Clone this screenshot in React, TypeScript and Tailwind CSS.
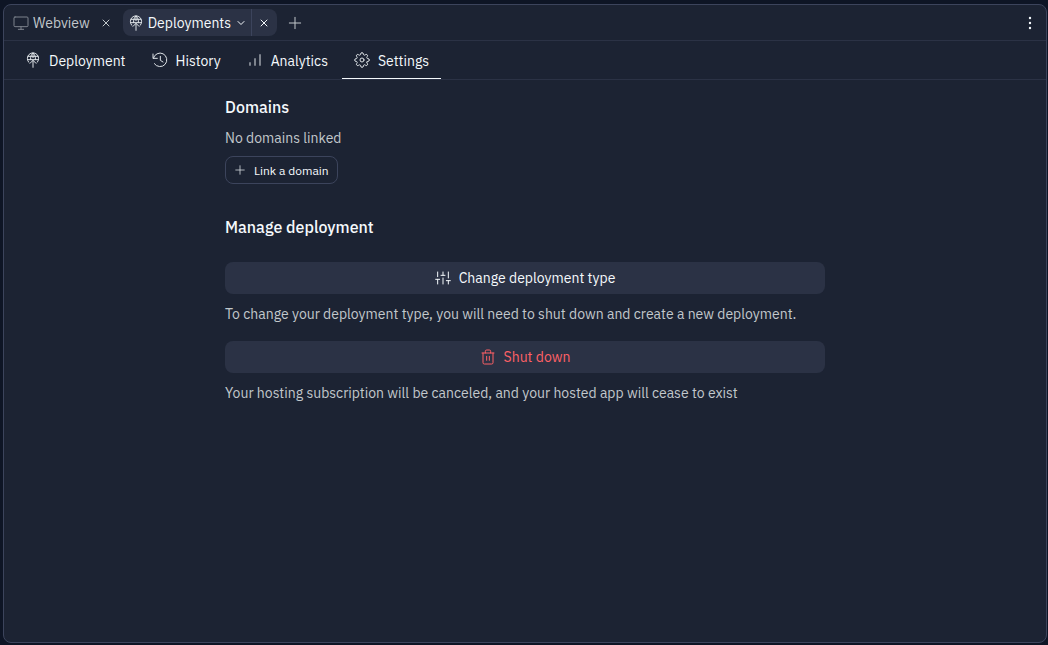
import type { ReactNode } from 'react';

type IconProps = { className?: string };

function Icon({ className = 'size-4', children }: IconProps & { children: ReactNode }) {
  return (
    <svg
      viewBox="0 0 24 24"
      className={`shrink-0 ${className}`}
      fill="none"
      stroke="currentColor"
      strokeWidth="1.5"
      strokeLinecap="round"
      strokeLinejoin="round"
      aria-hidden="true"
    >
      {children}
    </svg>
  );
}

const MonitorIcon = ({ className }: IconProps) => (
  <Icon className={className}>
    <rect x="1.5" y="3" width="21" height="14.5" rx="1.5" />
    <path d="M12 17.5V21.5M8 21.5h8" />
  </Icon>
);

const DeployIcon = ({ className }: IconProps) => (
  <Icon className={className}>
    <path d="M5.500 15.300a8.500 8.500 0 1 1 13 0" />
    <path d="M8.500 11.500C7.900 7.500 9 4 12 1.500c3 2.500 4.100 6 3.500 10" />
    <path d="M12 1.500v7M4.500 6.500h15M4 11.500h16" />
    <path d="M12 23V12.500M7.500 17l4.500-4.500 4.500 4.500" />
  </Icon>
);

const HistoryIcon = ({ className }: IconProps) => (
  <Icon className={className}>
    <path d="M1.500 3v6.500h6.500" />
    <path d="M2 9.500A10.200 10.200 0 1 1 3.500 17.500" />
    <path d="M12.500 6.500V12.500l4 2.500" />
  </Icon>
);

const BarsIcon = ({ className }: IconProps) => (
  <Icon className={className}>
    <path d="M4.500 20v-4M12 20V10M19.500 20V4" />
  </Icon>
);

const GearIcon = ({ className }: IconProps) => (
  <Icon className={className}>
    <circle cx="12" cy="12" r="3" />
    <path d="M19.400 15a1.650 1.650 0 0 0 .33 1.820l.06.06a2 2 0 0 1 0 2.830 2 2 0 0 1-2.830 0l-.06-.06a1.650 1.650 0 0 0-1.820-.33 1.650 1.650 0 0 0-1 1.510V21a2 2 0 0 1-2 2 2 2 0 0 1-2-2v-.09A1.650 1.650 0 0 0 9 19.400a1.650 1.650 0 0 0-1.820.33l-.06.06a2 2 0 0 1-2.830 0 2 2 0 0 1 0-2.830l.06-.06a1.650 1.650 0 0 0 .33-1.820 1.650 1.650 0 0 0-1.510-1H3a2 2 0 0 1-2-2 2 2 0 0 1 2-2h.09A1.650 1.650 0 0 0 4.600 9a1.650 1.650 0 0 0-.33-1.820l-.06-.06a2 2 0 0 1 0-2.830 2 2 0 0 1 2.830 0l.06.06a1.650 1.650 0 0 0 1.820.33H9a1.650 1.650 0 0 0 1-1.510V3a2 2 0 0 1 2-2 2 2 0 0 1 2 2v.09a1.650 1.650 0 0 0 1 1.510 1.650 1.650 0 0 0 1.820-.33l.06-.06a2 2 0 0 1 2.830 0 2 2 0 0 1 0 2.830l-.06.06a1.650 1.650 0 0 0-.33 1.820V9a1.650 1.650 0 0 0 1.510 1H21a2 2 0 0 1 2 2 2 2 0 0 1-2 2h-.09a1.650 1.650 0 0 0-1.510 1z" />
  </Icon>
);

const SlidersIcon = ({ className }: IconProps) => (
  <Icon className={className}>
    <path d="M4 21v-7M4 10V3M12 21v-9M12 8V3M20 21v-5M20 12V3M1 14h6M9 8h6M17 16h6" />
  </Icon>
);

const TrashIcon = ({ className }: IconProps) => (
  <Icon className={className}>
    <path d="M3 6h18M8 6V3.500a2 2 0 0 1 2-2h4a2 2 0 0 1 2 2V6M19.500 6v14.500a2 2 0 0 1-2 2h-11a2 2 0 0 1-2-2V6M10 11v6M14 11v6" />
  </Icon>
);

const PlusIcon = ({ className }: IconProps) => (
  <Icon className={className}>
    <path d="M12 3.500v17M3.500 12h17" />
  </Icon>
);

const CloseIcon = ({ className }: IconProps) => (
  <Icon className={className}>
    <path d="m6 6 12 12M18 6 6 18" strokeWidth="2" />
  </Icon>
);

const ChevronIcon = ({ className }: IconProps) => (
  <Icon className={className}>
    <path d="m6 9 6 6 6-6" strokeWidth="2" />
  </Icon>
);

const MoreIcon = ({ className }: IconProps) => (
  <Icon className={className}>
    <g fill="currentColor" stroke="none">
      <circle cx="12" cy="4.500" r="1.800" />
      <circle cx="12" cy="12" r="1.800" />
      <circle cx="12" cy="19.500" r="1.800" />
    </g>
  </Icon>
);

const sections = [
  { label: 'Deployment', icon: DeployIcon },
  { label: 'History', icon: HistoryIcon },
  { label: 'Analytics', icon: BarsIcon },
  { label: 'Settings', icon: GearIcon, active: true },
];

function ActionButton({ danger, children }: { danger?: boolean; children: ReactNode }) {
  return (
    <button
      type="button"
      className={`flex h-8 w-full items-center justify-center gap-2 rounded-lg bg-[#2b3245] ${
        danger ? 'text-[#ff6166]' : 'text-[#f5f9fc]'
      }`}
    >
      {children}
    </button>
  );
}

export default function App() {
  return (
    <div className="flex min-h-screen flex-col bg-[#0e1525] pt-1 pr-px pb-0.5 pl-[3px] font-['IBM_Plex_Sans','Roboto',sans-serif] text-sm leading-5 text-[#f5f9fc]">
      <div className="flex grow flex-col rounded-lg border border-[#3c445c] bg-[#1c2333]">
        <header className="flex h-9 items-center border-b border-[#2b3245] px-2">
          <div className="flex items-center text-[#c2c8cc]">
            <button type="button" className="flex h-7 items-center gap-1 pl-px">
              <MonitorIcon className="size-4 text-[#7d838d]" />
              Webview
            </button>
            <button type="button" aria-label="Close Webview" className="flex h-7 w-[33px] items-center justify-center">
              <CloseIcon className="size-3" />
            </button>
          </div>
          <div className="flex h-[27px] items-center rounded-lg bg-[#2b3245]">
            <button type="button" className="flex h-full items-center gap-1 border-r border-[#3c445c] pr-1 pl-[5px]">
              <DeployIcon className="size-4 text-[#dfe4e8]" />
              Deployments
              <ChevronIcon className="size-3" />
            </button>
            <button type="button" aria-label="Close Deployments" className="flex h-full w-[25px] items-center justify-center pr-px">
              <CloseIcon className="size-3" />
            </button>
          </div>
          <button type="button" aria-label="New tab" className="flex size-9 items-center justify-center text-[#c2c8cc]">
            <PlusIcon className="size-4" />
          </button>
          <button type="button" aria-label="More options" className="ml-auto flex h-7 items-center">
            <MoreIcon className="size-4" />
          </button>
        </header>

        <nav className="flex h-[39px] gap-0.5 border-b border-[#2b3245] pl-[9px]">
          {sections.map(({ label, icon: SectionIcon, active }) => (
            <a
              key={label}
              href={`#${label.toLowerCase()}`}
              aria-current={active ? 'page' : undefined}
              className={`flex items-center gap-2 border-b px-3 ${active ? 'border-[#f5f9fc]' : 'border-transparent'}`}
            >
              <SectionIcon className="size-4 text-[#dfe4e8]" />
              <span className="pt-0.5">{label}</span>
            </a>
          ))}
        </nav>

        <main className="mx-auto w-full max-w-[600px] pt-[15px]">
          <section className="flex flex-col items-start">
            <h2 className="text-base leading-6 font-medium">Domains</h2>
            <p className="mt-[9px] text-[#c2c8cc]">No domains linked</p>
            <button
              type="button"
              className="mt-2 flex h-7 items-center gap-2 rounded-lg border border-[#3c445c] px-2 text-xs"
            >
              <PlusIcon className="size-3 text-[#dfe4e8]" />
              <span className="pt-0.5">Link a domain</span>
            </button>
          </section>

          <section className="mt-[31px]">
            <h2 className="text-base leading-6 font-medium">Manage deployment</h2>
            <div className="mt-[23px]">
              <ActionButton>
                <SlidersIcon />
                Change deployment type
              </ActionButton>
              <p className="mt-2.5 text-[#c2c8cc]">
                To change your deployment type, you will need to shut down and create a new deployment.
              </p>
            </div>
            <div className="mt-[17px]">
              <ActionButton danger>
                <TrashIcon />
                Shut down
              </ActionButton>
              <p className="mt-2.5 text-[#c2c8cc]">
                Your hosting subscription will be canceled, and your hosted app will cease to exist
              </p>
            </div>
          </section>
        </main>
      </div>
    </div>
  );
}
